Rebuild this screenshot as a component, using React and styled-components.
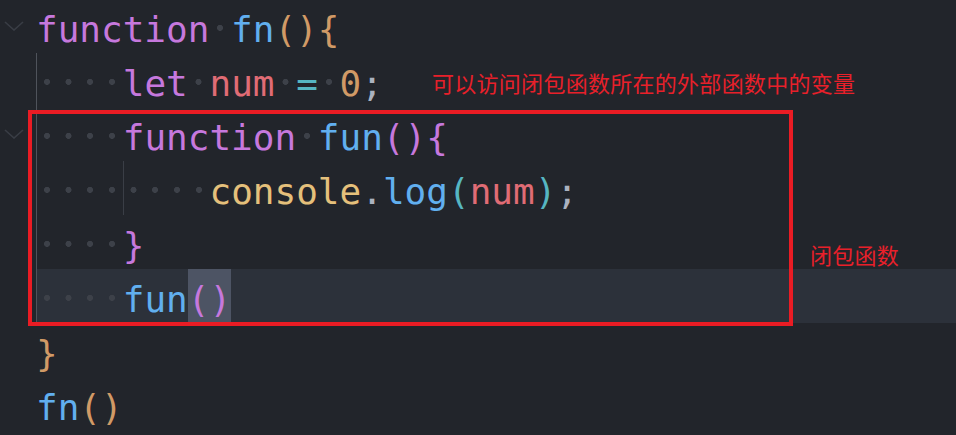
import React from "react";
import styled, { createGlobalStyle } from "styled-components";

const GlobalStyle = createGlobalStyle`
  html, body {
    margin: 0;
    padding: 0;
    background: #22252b;
  }
`;

const colors = {
  keyword: "#c678dd",
  func: "#61afef",
  variable: "#e06c75",
  operator: "#56b6c2",
  number: "#d19a66",
  object: "#e5c07b",
  punct: "#abb2bf",
};

const bracketColors = ["#d19a66", "#c678dd", "#56b6c2"];

const Editor = styled.div`
  position: relative;
  width: 956px;
  height: 435px;
  overflow: hidden;
  background: #22252b;
  margin-top: -1px;
`;

const Line = styled.div`
  display: flex;
  height: 54px;
`;

const Gutter = styled.div`
  flex: none;
  width: 36px;
  display: flex;
  align-items: center;
  justify-content: flex-start;
  padding-left: 4px;
  box-sizing: border-box;
`;

const Code = styled.div`
  flex: 1;
  height: 54px;
  white-space: pre;
  font-family: "DejaVu Sans Mono", "Liberation Mono", monospace;
  font-size: 36px;
  line-height: 61px;
  color: ${colors.punct};
  background: ${(p) => (p.$active ? "#2c313a" : "transparent")};
`;

const Indent = styled.span`
  display: inline-block;
  vertical-align: top;
  height: 54px;
  box-shadow: inset 1px 0 0 ${(p) => (p.$dim ? "#3a3e46" : "#4f535b")};
`;

const WS = styled.span`
  background: radial-gradient(
    circle at 50% 46%,
    #3d4149 0,
    #3d4149 2.7px,
    transparent 3.3px
  );
`;

const Token = styled.span`
  color: ${(p) => colors[p.$kind]};
`;

const Bracket = styled.span`
  color: ${(p) => bracketColors[p.$level]};
`;

const Selection = styled.span`
  display: inline-block;
  vertical-align: top;
  height: 54px;
  background: #4d5464;
`;

const Fold = styled.svg`
  width: 20px;
  height: 10px;
`;

const Highlight = styled.div`
  position: absolute;
  left: 28px;
  top: 111px;
  width: 765px;
  height: 216px;
  box-sizing: border-box;
  border: 4px solid #ea1c24;
  pointer-events: none;
`;

const Note = styled.div`
  position: absolute;
  left: ${(p) => p.$x}px;
  top: ${(p) => p.$y}px;
  font-family: "Noto Sans CJK SC", "Noto Sans", sans-serif;
  font-size: 22px;
  line-height: 22px;
  letter-spacing: 0.28px;
  color: #e8202a;
  white-space: nowrap;
`;

const Chevron = () => (
  <Fold viewBox="0 0 20 10">
    <polyline
      points="1,1 10,9 19,1"
      fill="none"
      stroke="#393d45"
      strokeWidth="1.6"
    />
  </Fold>
);

const Sp = () => <WS> </WS>;

const Tab = ({ dim }) => (
  <Indent $dim={dim}>
    <Sp />
    <Sp />
    <Sp />
    <Sp />
  </Indent>
);

const CodeLine = ({ fold, active, children }) => (
  <Line>
    <Gutter>{fold && <Chevron />}</Gutter>
    <Code $active={active}>{children}</Code>
  </Line>
);

export default function App() {
  return (
    <>
      <GlobalStyle />
      <Editor>
        <CodeLine fold>
          <Token $kind="keyword">function</Token>
          <Sp />
          <Token $kind="func">fn</Token>
          <Bracket $level={0}>()</Bracket>
          <Bracket $level={0}>{"{"}</Bracket>
        </CodeLine>
        <CodeLine>
          <Tab />
          <Token $kind="keyword">let</Token>
          <Sp />
          <Token $kind="variable">num</Token>
          <Sp />
          <Token $kind="operator">=</Token>
          <Sp />
          <Token $kind="number">0</Token>
          <Token $kind="punct">;</Token>
        </CodeLine>
        <CodeLine fold>
          <Tab />
          <Token $kind="keyword">function</Token>
          <Sp />
          <Token $kind="func">fun</Token>
          <Bracket $level={1}>()</Bracket>
          <Bracket $level={1}>{"{"}</Bracket>
        </CodeLine>
        <CodeLine>
          <Tab />
          <Tab dim />
          <Token $kind="object">console</Token>
          <Token $kind="punct">.</Token>
          <Token $kind="func">log</Token>
          <Bracket $level={2}>(</Bracket>
          <Token $kind="variable">num</Token>
          <Bracket $level={2}>)</Bracket>
          <Token $kind="punct">;</Token>
        </CodeLine>
        <CodeLine>
          <Tab />
          <Bracket $level={1}>{"}"}</Bracket>
        </CodeLine>
        <CodeLine active>
          <Tab />
          <Token $kind="func">fun</Token>
          <Selection>
            <Bracket $level={1}>()</Bracket>
          </Selection>
        </CodeLine>
        <CodeLine>
          <Bracket $level={0}>{"}"}</Bracket>
        </CodeLine>
        <CodeLine>
          <Token $kind="func">fn</Token>
          <Bracket $level={0}>()</Bracket>
        </CodeLine>

        <Highlight />
        <Note $x={432} $y={72}>
          可以访问闭包函数所在的外部函数中的变量
        </Note>
        <Note $x={810} $y={244}>
          闭包函数
        </Note>
      </Editor>
    </>
  );
}
